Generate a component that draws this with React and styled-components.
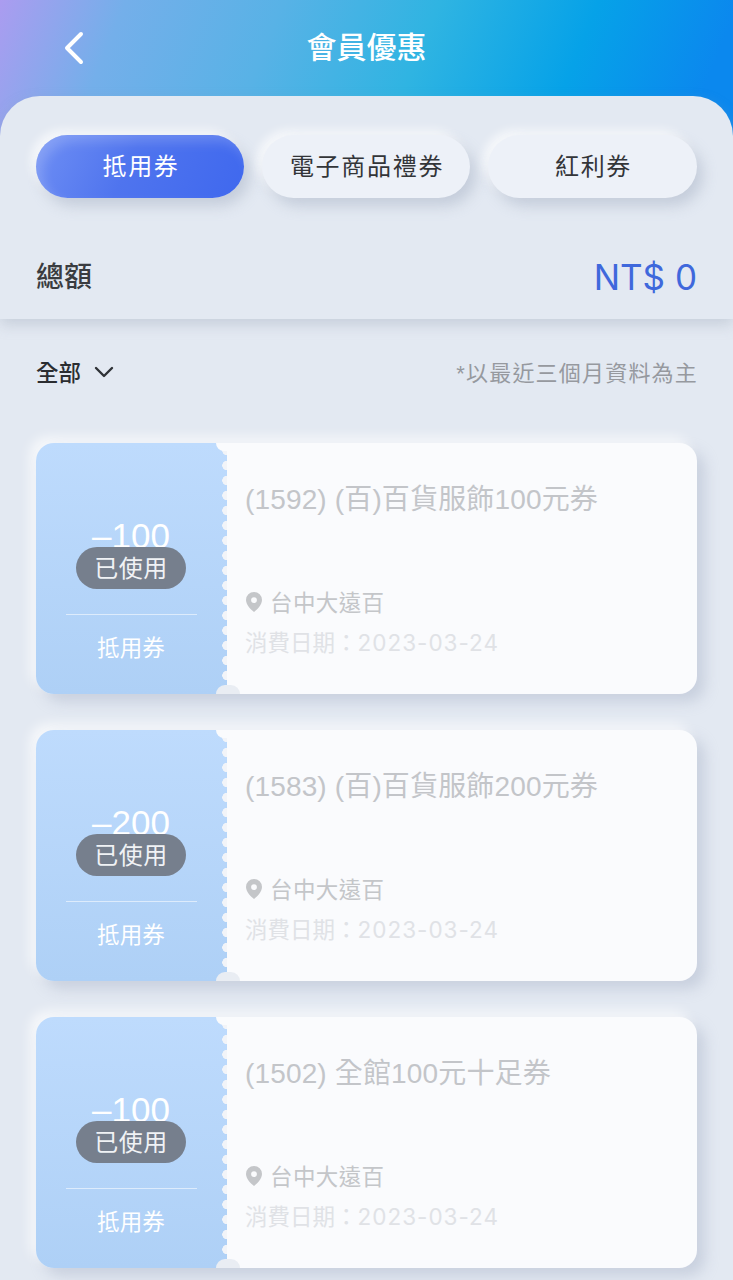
import styled, { createGlobalStyle } from "styled-components";

const coupons = [
  { id: 1, amount: "–100", title: "(1592) (百)百貨服飾100元券" },
  { id: 2, amount: "–200", title: "(1583) (百)百貨服飾200元券" },
  { id: 3, amount: "–100", title: "(1502) 全館100元十足券" },
];

export default function App() {
  return (
    <Page>
      <GlobalStyle />
      <Header>
        <BackButton>
          <svg width="24" height="34" viewBox="0 0 24 34" fill="none">
            <path d="M19 3 L5 17 L19 31" stroke="#fff" strokeWidth="4" strokeLinecap="round" strokeLinejoin="round" />
          </svg>
        </BackButton>
        <HeaderTitle>會員優惠</HeaderTitle>
      </Header>

      <TopPanel>
        <Tabs>
          <Tab $active>抵用券</Tab>
          <Tab>電子商品禮券</Tab>
          <Tab>紅利券</Tab>
        </Tabs>
        <TotalRow>
          <TotalLabel>總額</TotalLabel>
          <TotalValue>NT$ 0</TotalValue>
        </TotalRow>
      </TopPanel>

      <FilterRow>
        <FilterButton>
          全部
          <svg width="22" height="14" viewBox="0 0 22 14" fill="none">
            <path d="M3 3 L11 11 L19 3" stroke="#2f3237" strokeWidth="2.4" strokeLinecap="round" strokeLinejoin="round" />
          </svg>
        </FilterButton>
        <FilterNote>*以最近三個月資料為主</FilterNote>
      </FilterRow>

      <CouponList>
        {coupons.map((c) => (
          <Coupon key={c.id}>
            <CouponLeft>
              <Amount>{c.amount}</Amount>
              <UsedBadge>已使用</UsedBadge>
              <Divider />
              <CouponType>抵用券</CouponType>
              <Scallop />
            </CouponLeft>
            <CouponBody>
              <CouponTitle>{c.title}</CouponTitle>
              <Location>
                <svg width="18" height="22" viewBox="0 0 18 22">
                  <path
                    fillRule="evenodd"
                    d="M9 1a8 8 0 0 0-8 8c0 5 5.4 10 8 12 2.6-2 8-7 8-12a8 8 0 0 0-8-8Zm0 5.2a2.9 2.9 0 1 1 0 5.8 2.9 2.9 0 0 1 0-5.8Z"
                    fill="#c4c6c9"
                  />
                </svg>
                台中大遠百
              </Location>
              <DateLine>
                消費日期：<DateValue>2023-03-24</DateValue>
              </DateLine>
            </CouponBody>
            <NotchTop />
            <NotchBottom />
          </Coupon>
        ))}
      </CouponList>
    </Page>
  );
}

const GlobalStyle = createGlobalStyle`
  html, body {
    margin: 0;
    padding: 0;
    height: 1280px;
    overflow: hidden;
    background: #e3e9f2;
  }
  * {
    box-sizing: border-box;
  }
`;

const Page = styled.div`
  width: 733px;
  height: 1280px;
  overflow: hidden;
  background: #e3e9f2;
  font-family: "Liberation Sans", "Noto Sans CJK TC", sans-serif;
`;

const Header = styled.div`
  height: 136px;
  margin-bottom: -40px;
  padding: 0 0 40px;
  display: flex;
  align-items: center;
  justify-content: center;
  position: relative;
  background: linear-gradient(112deg, #ab9cf0 0%, #74afea 16%, #58b2e6 36%, #2fb4e2 56%, #06a2e8 76%, #0b88ee 94%);
`;

const BackButton = styled.div`
  position: absolute;
  left: 62px;
  top: 31px;
  display: flex;
`;

const HeaderTitle = styled.div`
  color: #fff;
  font-size: 30px;
  line-height: 96px;
  font-weight: 500;
`;

const TopPanel = styled.div`
  position: relative;
  height: 223px;
  padding: 39px 36px 0;
  background: #e3e9f2;
  border-radius: 40px 40px 0 0;
  box-shadow: 0 6px 14px rgba(150, 160, 178, 0.35);
`;

const Tabs = styled.div`
  display: grid;
  grid-template-columns: 208px 208px 209px;
  gap: 18px;
`;

const Tab = styled.div`
  height: 63px;
  padding: 0 0 4px 2px;
  border-radius: 32px;
  display: flex;
  align-items: center;
  justify-content: center;
  font-size: 24px;
  letter-spacing: 1.7px;
  color: ${(p) => (p.$active ? "#fff" : "#333538")};
  background: ${(p) => (p.$active ? "linear-gradient(115deg, #6f8ff4 0%, #4f74ee 45%, #3f68ee 100%)" : "#edf1f8")};
  box-shadow: ${(p) => (p.$active ? "inset 6px 7px 12px rgba(255, 255, 255, 0.18), " : "")}6px 8px 14px
      rgba(160, 170, 190, 0.45),
    -5px -5px 10px rgba(255, 255, 255, 0.7);
`;

const TotalRow = styled.div`
  height: 121px;
  display: flex;
  align-items: flex-end;
  justify-content: space-between;
  padding-bottom: 21px;
`;

const TotalLabel = styled.div`
  font-size: 28px;
  line-height: 40px;
  font-weight: 500;
  color: #3a3c40;
`;

const TotalValue = styled.div`
  font-family: "Inter", "Liberation Sans", sans-serif;
  font-size: 35px;
  font-weight: 400;
  line-height: 40px;
  margin-bottom: 1px;
  color: #3f68dc;
`;

const FilterRow = styled.div`
  height: 30px;
  margin: 37px 36px 57px;
  display: flex;
  align-items: center;
  justify-content: space-between;
`;

const FilterButton = styled.div`
  display: flex;
  align-items: center;
  gap: 12px;
  font-size: 22.5px;
  font-weight: 500;
  color: #2b2d31;

  svg {
    margin-top: 2px;
  }
`;

const FilterNote = styled.div`
  font-size: 22px;
  letter-spacing: 1.2px;
  margin-right: -1px;
  color: #96999f;
`;

const CouponList = styled.div`
  display: flex;
  flex-direction: column;
  gap: 36px;
  padding: 0 36px;
`;

const Coupon = styled.div`
  position: relative;
  height: 251px;
  display: flex;
  border-radius: 18px;
  background: #fafbfd;
  box-shadow: 8px 8px 14px rgba(165, 175, 195, 0.42), -6px -6px 12px rgba(255, 255, 255, 0.7);
`;

const CouponLeft = styled.div`
  position: relative;
  width: 191px;
  flex: none;
  display: flex;
  flex-direction: column;
  align-items: center;
  padding-top: 73px;
  border-radius: 18px 0 0 18px;
  background: linear-gradient(180deg, #bedbfd 0%, #aed0f6 100%);
`;

const Amount = styled.div`
  font-size: 35px;
  line-height: 40px;
  margin-left: -1px;
  color: #fff;
`;

const UsedBadge = styled.div`
  position: absolute;
  top: 104px;
  left: 40px;
  width: 110px;
  height: 42px;
  padding-bottom: 3px;
  border-radius: 21px;
  display: flex;
  align-items: center;
  justify-content: center;
  font-size: 24px;
  letter-spacing: 0.5px;
  color: #f0f2f5;
  background: #767f8d;
`;

const Divider = styled.div`
  width: 131px;
  height: 1px;
  margin-top: 58px;
  background: rgba(255, 255, 255, 0.55);
`;

const CouponType = styled.div`
  margin-top: 18px;
  font-size: 22.5px;
  line-height: 32px;
  margin-left: -1px;
  letter-spacing: 0.2px;
  color: #fff;
`;

const Scallop = styled.div`
  position: absolute;
  top: 0;
  right: 0;
  bottom: 0;
  width: 7px;
  background-image: radial-gradient(circle at 100% 50%, #f2f4f8 4.5px, transparent 5px);
  background-size: 7px 15px;
`;

const CouponBody = styled.div`
  flex: 1;
  display: flex;
  flex-direction: column;
  padding: 41px 0 36px 18px;
`;

const CouponTitle = styled.div`
  font-size: 28px;
  line-height: 32px;
  letter-spacing: 0.15px;
  color: #c3c5c9;
  margin-bottom: auto;
`;

const Location = styled.div`
  display: flex;
  align-items: center;
  gap: 7px;
  height: 30px;
  margin-bottom: 12px;
  font-size: 22.5px;
  letter-spacing: 0.4px;
  color: #c4c6c9;

  svg {
    margin-top: 1px;
  }
`;

const DateLine = styled.div`
  height: 30px;
  line-height: 30px;
  font-size: 22.5px;
  color: #e0e2e6;
`;

const DateValue = styled.span`
  font-family: "Inter", "Liberation Sans", sans-serif;
  letter-spacing: 1px;
`;

const NotchTop = styled.div`
  position: absolute;
  left: 180px;
  top: 0;
  width: 22px;
  height: 8px;
  border-radius: 0 0 11px 11px;
  background: #fafbfd;
`;

const NotchBottom = styled.div`
  position: absolute;
  left: 180px;
  bottom: 0;
  width: 24px;
  height: 9px;
  border-radius: 12px 12px 0 0;
  background: #e9edf3;
`;
